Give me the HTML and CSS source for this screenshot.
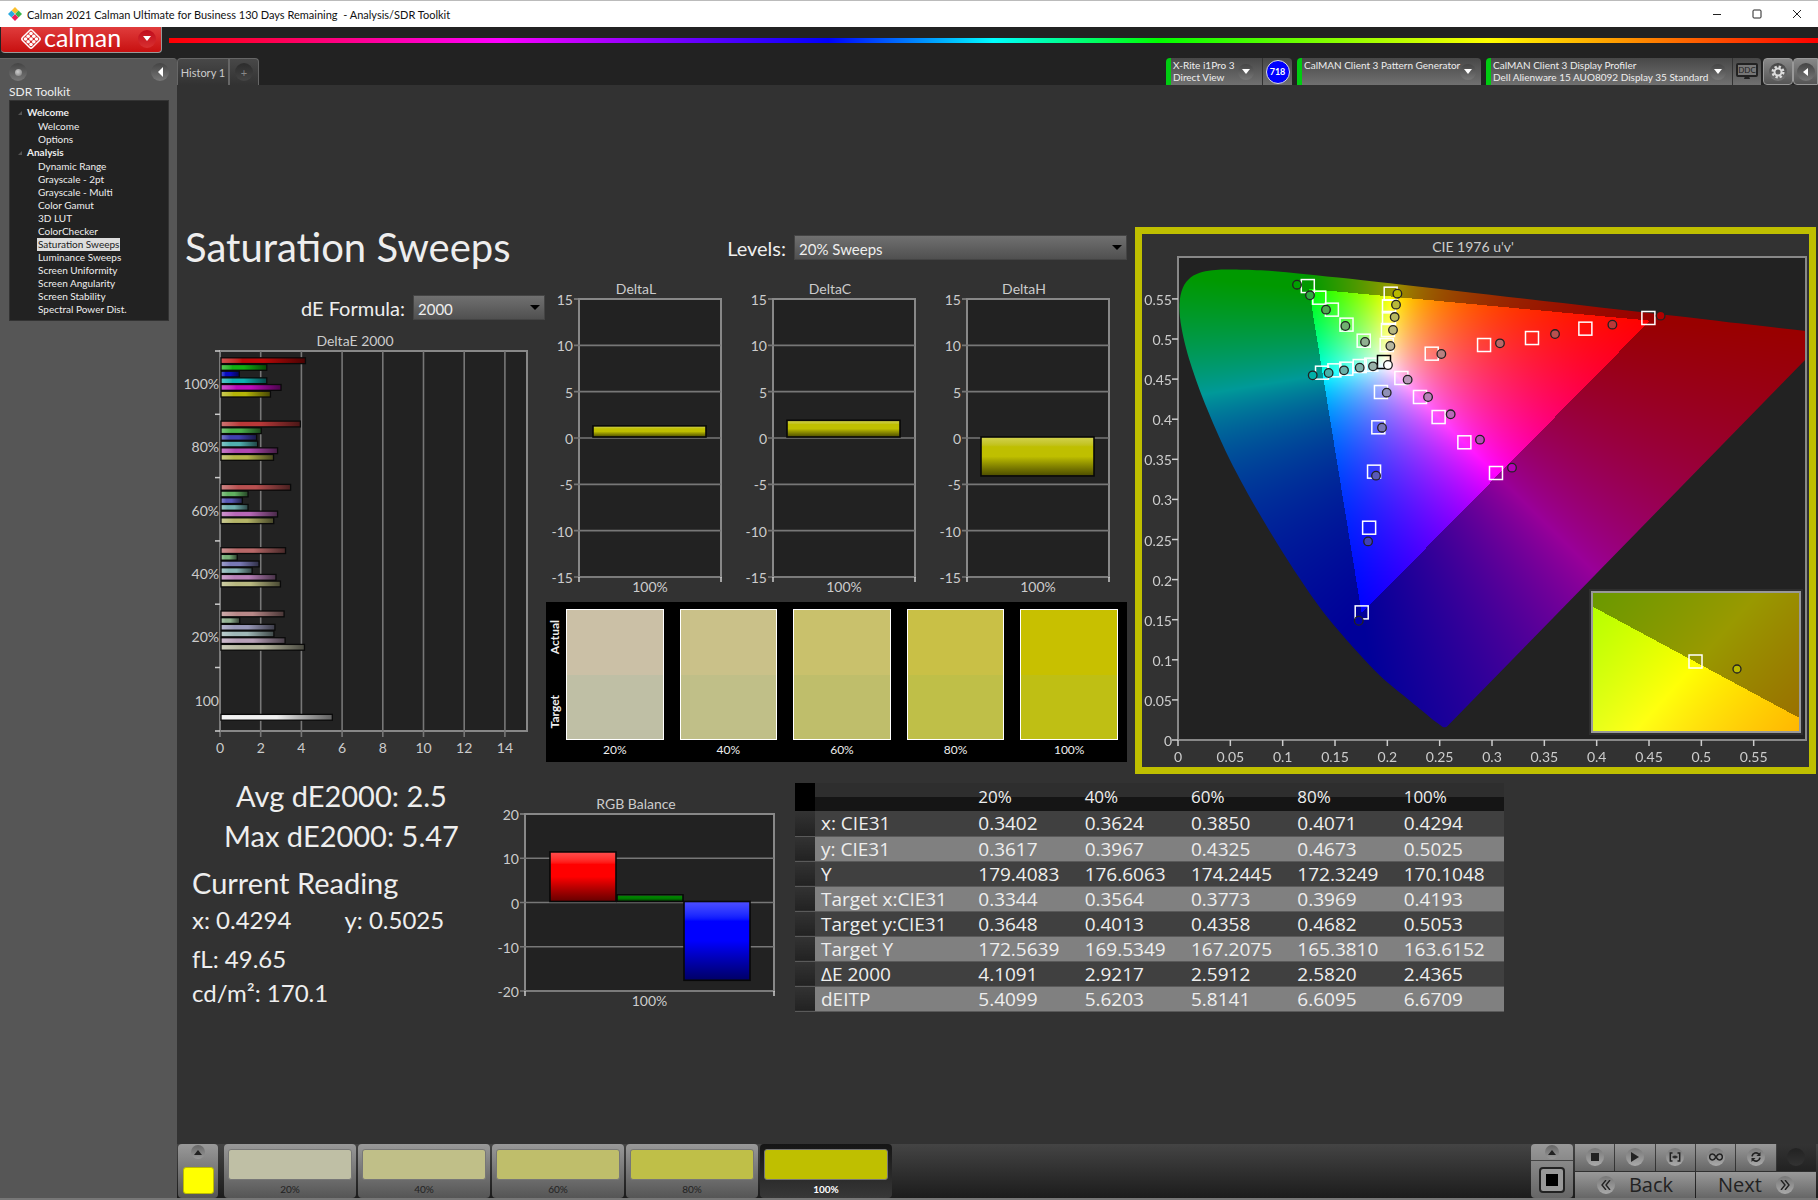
FILE: index.html
```html
<!DOCTYPE html>
<html lang="en">
<head>
    <meta charset="UTF-8">
    <meta name="viewport" content="width=device-width, initial-scale=1.0">
    <title>Calman 2021 - Analysis/SDR Toolkit</title>
    <link rel="stylesheet" href="styles.css">
    <script src="charts.js" defer></script>
</head>
<body>
    <header class="titlebar">
        <svg class="app-icon" width="14" height="14" viewBox="0 0 14 14">
            <path d="M7 0l3.4 3.4L7 6.8 3.6 3.4z" fill="#fbc02d"/>
            <path d="M3.5 3.6L6.9 7l-3.4 3.4L0 7z" fill="#29a9e0"/>
            <path d="M10.5 3.6L14 7l-3.5 3.4L7.1 7z" fill="#3cb54a"/>
            <path d="M7 7.2l3.4 3.4L7 14l-3.4-3.4z" fill="#ec1c5a"/>
        </svg>
        <span class="titlebar-text">Calman 2021 Calman Ultimate for Business 130 Days Remaining&nbsp; - Analysis/SDR Toolkit</span>
        <div class="window-buttons">
            <button aria-label="Minimize"><svg width="10" height="10" viewBox="0 0 10 10"><path d="M1 5.5h8"/></svg></button>
            <button aria-label="Maximize"><svg width="10" height="10" viewBox="0 0 10 10"><rect x="1" y="1" width="8" height="8" rx="1"/></svg></button>
            <button aria-label="Close"><svg width="10" height="10" viewBox="0 0 10 10"><path d="M1 1l8 8M9 1l-8 8"/></svg></button>
        </div>
    </header>

    <div class="brandbar">
        <button class="brand">
            <svg width="22" height="22" viewBox="0 0 22 22">
                <rect x="4" y="4" width="14" height="14" rx="2" transform="rotate(45 11 11)" fill="none" stroke="#fff" stroke-width="1.500"/>
                <g fill="#fff">
                    <circle cx="11" cy="5.500" r="1.800"/><circle cx="8.200" cy="8.200" r="1.800"/><circle cx="13.800" cy="8.200" r="1.800"/>
                    <circle cx="5.500" cy="11" r="1.800"/><circle cx="11" cy="11" r="1.800"/><circle cx="16.500" cy="11" r="1.800"/>
                    <circle cx="8.200" cy="13.800" r="1.800"/><circle cx="13.800" cy="13.800" r="1.800"/><circle cx="11" cy="16.500" r="1.800"/>
                </g>
            </svg>
            <span class="brand-name">calman</span>
            <span class="round round-red"><svg width="8" height="5" viewBox="0 0 8 5"><path d="M0 0h8L4 5z" fill="#fff"/></svg></span>
        </button>
        <div class="rainbow"></div>
    </div>

    <div class="layout">
        <aside class="sidebar">
            <div class="sidebar-top">
                <span class="round"><span class="knob"></span></span>
                <button class="round" aria-label="Collapse"><svg width="5" height="10" viewBox="0 0 5 10"><path d="M5 0v10L0 5z" fill="#fff"/></svg></button>
            </div>
            <h2>SDR Toolkit</h2>
            <nav class="tree">
                <h3>Welcome</h3>
                <a href="#">Welcome</a>
                <a href="#">Options</a>
                <h3>Analysis</h3>
                <a href="#">Dynamic Range</a>
                <a href="#">Grayscale - 2pt</a>
                <a href="#">Grayscale - Multi</a>
                <a href="#">Color Gamut</a>
                <a href="#">3D LUT</a>
                <a href="#">ColorChecker</a>
                <a href="#" class="selected">Saturation Sweeps</a>
                <a href="#">Luminance Sweeps</a>
                <a href="#">Screen Uniformity</a>
                <a href="#">Screen Angularity</a>
                <a href="#">Screen Stability</a>
                <a href="#">Spectral Power Dist.</a>
            </nav>
        </aside>

        <div class="workspace">
            <div class="tabs">
                <button class="tab">History 1</button>
                <button class="tab tab-add" aria-label="Add history"><span class="round">+</span></button>
                <div class="devices">
                    <div class="device meter">
                        <button class="device-name">X-Rite i1Pro 3<br>Direct View</button>
                        <span class="round"><svg width="8" height="5" viewBox="0 0 8 5"><path d="M0 0h8L4 5z" fill="#fff"/></svg></span>
                        <span class="count-box"><span class="count">718</span></span>
                    </div>
                    <div class="device generator">
                        <button class="device-name">CalMAN Client 3 Pattern Generator</button>
                        <span class="round"><svg width="8" height="5" viewBox="0 0 8 5"><path d="M0 0h8L4 5z" fill="#fff"/></svg></span>
                    </div>
                    <div class="device profiler">
                        <button class="device-name">CalMAN Client 3 Display Profiler<br>Dell Alienware 15 AUO8092 Display 35 Standard</button>
                        <span class="round"><svg width="8" height="5" viewBox="0 0 8 5"><path d="M0 0h8L4 5z" fill="#fff"/></svg></span>
                        <span class="ddc-box">
                            <svg width="22" height="18" viewBox="0 0 22 18">
                                <rect x="1" y="1" width="20" height="12" rx="1" fill="#777" stroke="#222" stroke-width="2"/>
                                <path d="M9 13h4l1 3H8z" fill="#222"/>
                                <text x="11" y="10" text-anchor="middle" class="ddc-text">DDC</text>
                            </svg>
                        </span>
                    </div>
                    <button class="tool" aria-label="Settings">
                        <span class="round">
                            <svg width="14" height="14" viewBox="0 0 14 14">
                                <circle cx="7" cy="7" r="5.300" fill="none" stroke="#ddd" stroke-width="2.400" stroke-dasharray="2.300 1.860"/>
                                <circle cx="7" cy="7" r="3.500" fill="none" stroke="#ddd" stroke-width="2"/>
                            </svg>
                        </span>
                    </button>
                    <button class="tool tool-last" aria-label="Collapse devices">
                        <span class="round"><svg width="5" height="8" viewBox="0 0 5 8"><path d="M5 0v8L0 4z" fill="#fff"/></svg></span>
                    </button>
                </div>
            </div>

            <main class="content">
                <section class="upper">
                    <div class="de-column">
                        <h1>Saturation Sweeps</h1>
                        <div class="field de-field">
                            <label for="formula">dE Formula:</label>
                            <span class="select"><select id="formula"><option>2000</option><option>1994</option><option>1976</option></select></span>
                        </div>
                        <svg id="delta-e" class="chart" viewBox="0 0 361 424"></svg>
                    </div>

                    <div class="mid-column">
                        <div class="field levels-field">
                            <label for="levels">Levels:</label>
                            <span class="select"><select id="levels"><option>20% Sweeps</option><option>25% Sweeps</option></select></span>
                        </div>
                        <div class="delta-row">
                            <svg id="delta-l" class="chart" viewBox="0 0 194 322"></svg>
                            <svg id="delta-c" class="chart" viewBox="0 0 194 322"></svg>
                            <svg id="delta-h" class="chart" viewBox="0 0 194 322"></svg>
                        </div>
                        <div class="swatches">
                            <div class="swatch-side"><span>Actual</span><span>Target</span></div>
                            <figure class="swatch s20"><div></div><figcaption>20%</figcaption></figure>
                            <figure class="swatch s40"><div></div><figcaption>40%</figcaption></figure>
                            <figure class="swatch s60"><div></div><figcaption>60%</figcaption></figure>
                            <figure class="swatch s80"><div></div><figcaption>80%</figcaption></figure>
                            <figure class="swatch s100"><div></div><figcaption>100%</figcaption></figure>
                        </div>
                    </div>

                    <div class="cie">
                        <svg id="cie-chart" class="chart" viewBox="0 0 667 533">
                            <text x="331" y="18" class="axis" text-anchor="middle">CIE 1976 u'v'</text>
                            <rect x="36" y="23" width="628" height="483" fill="#222"/>
                            <foreignObject x="36" y="23" width="628" height="483"><canvas id="cie-fill" width="628" height="483"></canvas></foreignObject>
                            <g id="cie-axes"></g>
                            <g id="cie-points"></g>
                            <rect x="447" y="355" width="214" height="146" fill="#2e2e2e"/>
                            <foreignObject x="450" y="358" width="208" height="140"><canvas id="cie-zoom" width="208" height="140"></canvas></foreignObject>
                            <rect x="450" y="358" width="208" height="140" fill="none" stroke="#999" stroke-width="2"/>
                            <rect x="547" y="421" width="13" height="13" class="target"/>
                            <circle cx="595" cy="435" r="4" fill="#b9b900" class="actual"/>
                        </svg>
                    </div>
                </section>

                <section class="lower">
                    <div class="stats">
                        <p class="big center">Avg dE2000: 2.5</p>
                        <p class="big center">Max dE2000: 5.47</p>
                        <p class="big current">Current Reading</p>
                        <p class="pair"><span>x: 0.4294</span><span>y: 0.5025</span></p>
                        <p>fL: 49.65</p>
                        <p>cd/m²: 170.1</p>
                    </div>
                    <svg id="rgb" class="chart" viewBox="0 0 288 240"></svg>
                    <table>
                        <thead>
                            <tr><th class="grip"></th><th></th><th>20%</th><th>40%</th><th>60%</th><th>80%</th><th>100%</th></tr>
                        </thead>
                        <tbody>
                            <tr><td class="grip"></td><td>x: CIE31</td><td>0.3402</td><td>0.3624</td><td>0.3850</td><td>0.4071</td><td>0.4294</td></tr>
                            <tr><td class="grip"></td><td>y: CIE31</td><td>0.3617</td><td>0.3967</td><td>0.4325</td><td>0.4673</td><td>0.5025</td></tr>
                            <tr><td class="grip"></td><td>Y</td><td>179.4083</td><td>176.6063</td><td>174.2445</td><td>172.3249</td><td>170.1048</td></tr>
                            <tr><td class="grip"></td><td>Target x:CIE31</td><td>0.3344</td><td>0.3564</td><td>0.3773</td><td>0.3969</td><td>0.4193</td></tr>
                            <tr><td class="grip"></td><td>Target y:CIE31</td><td>0.3648</td><td>0.4013</td><td>0.4358</td><td>0.4682</td><td>0.5053</td></tr>
                            <tr><td class="grip"></td><td>Target Y</td><td>172.5639</td><td>169.5349</td><td>167.2075</td><td>165.3810</td><td>163.6152</td></tr>
                            <tr><td class="grip"></td><td>ΔE 2000</td><td>4.1091</td><td>2.9217</td><td>2.5912</td><td>2.5820</td><td>2.4365</td></tr>
                            <tr><td class="grip"></td><td>dEITP</td><td>5.4099</td><td>5.6203</td><td>5.8141</td><td>6.6095</td><td>6.6709</td></tr>
                        </tbody>
                    </table>
                </section>
            </main>

            <footer class="bottombar">
                <button class="current-patch" aria-label="Current pattern">
                    <span class="round small"><svg width="8" height="5" viewBox="0 0 8 5"><path d="M0 5h8L4 0z" fill="#222"/></svg></span>
                    <span class="patch-yellow"></span>
                </button>
                <button class="patch p20"><span></span>20%</button>
                <button class="patch p40"><span></span>40%</button>
                <button class="patch p60"><span></span>60%</button>
                <button class="patch p80"><span></span>80%</button>
                <button class="patch p100 active"><span></span>100%</button>

                <div class="stop-box">
                    <button class="stop-up" aria-label="Expand"><span class="round small"><svg width="8" height="5" viewBox="0 0 8 5"><path d="M0 5h8L4 0z" fill="#222"/></svg></span></button>
                    <button class="stop-main" aria-label="Pattern window"><svg width="28" height="28" viewBox="0 0 28 28"><rect x="2" y="2" width="24" height="24" rx="3" fill="#999" stroke="#222" stroke-width="2"/><path d="M8 8h12v12H8z" fill="#000"/></svg></button>
                </div>
                <div class="transport">
                    <div class="transport-row">
                        <button aria-label="Stop"><span class="round"><svg width="8" height="8" viewBox="0 0 8 8"><path d="M0 0h8v8H0z" fill="#222"/></svg></span></button>
                        <button aria-label="Play"><span class="round"><svg width="8" height="10" viewBox="0 0 8 10"><path d="M0 0l8 5-8 5z" fill="#222"/></svg></span></button>
                        <button aria-label="Read series"><span class="round"><svg width="12" height="10" viewBox="0 0 12 10" fill="none" stroke="#222" stroke-width="1.500"><path d="M3.500 1H1.300v8h2.200M8.500 1h2.200v8H8.500M3.500 5h5" /><path d="M5.200 3.500v3M6.800 3.500v3" stroke-width="1"/></svg></span></button>
                        <button aria-label="Read continuously"><span class="round"><svg width="14" height="8" viewBox="0 0 14 8" fill="none" stroke="#222" stroke-width="1.500"><path d="M7 4C5.500 1.500 4.500 1 3.600 1a3 3 0 0 0 0 6C4.500 7 5.500 6.500 7 4s2.500-3 3.400-3a3 3 0 0 1 0 6C9.500 7 8.500 6.500 7 4z"/></svg></span></button>
                        <button aria-label="Refresh"><span class="round"><svg width="12" height="12" viewBox="0 0 12 12" fill="none" stroke="#222" stroke-width="1.700"><path d="M2 5.300A4 4 0 0 1 9 3.200M10 6.700A4 4 0 0 1 3 8.800"/><path d="M10.500 1v4h-4zM1.500 11V7h4z" fill="#222" stroke="none"/></svg></span></button>
                        <button aria-label="Record" disabled><span class="round dark"></span></button>
                    </div>
                    <div class="transport-row nav-row">
                        <button><span class="round"><svg width="10" height="10" viewBox="0 0 10 10" fill="none" stroke="#222" stroke-width="1.400"><path d="M5 0L1 5l4 5M9 0L5 5l4 5"/></svg></span>Back</button>
                        <button>Next<span class="round"><svg width="10" height="10" viewBox="0 0 10 10" fill="none" stroke="#222" stroke-width="1.400"><path d="M1 0l4 5-4 5M5 0l4 5-4 5"/></svg></span></button>
                    </div>
                </div>
            </footer>
        </div>
    </div>
</body>
</html>
```
FILE: styles.css
```css
* {
    box-sizing: border-box;
}

body {
    margin: 0;
    min-height: 100vh;
    display: flex;
    flex-direction: column;
    font-family: Lato, "Open Sans", sans-serif;
    font-size: 12px;
    color: #eee;
    background-color: #323232;
    border-top: 1px solid #bbb;
    border-bottom: 2px solid #777;
}

button {
    font-family: inherit;
    color: inherit;
    border: none;
    padding: 0;
    margin: 0;
    background: none;
    cursor: pointer;
}

h1, h2, h3, p, figure {
    margin: 0;
    font-weight: normal;
}

/* window frame */
.titlebar {
    display: flex;
    align-items: center;
    height: 26px;
    padding: 0 6px 0 8px;
    background-color: #fff;
    color: #111;
}

.titlebar-text {
    margin-left: 5px;
    font-size: 11px;
}

.window-buttons {
    margin-left: auto;
    display: flex;
}

.window-buttons button {
    width: 40px;
    height: 24px;
    display: grid;
    place-items: center;
}

.window-buttons button:last-child {
    width: 30px;
    margin-left: 5px;
}

.window-buttons svg {
    fill: none;
    stroke: #222;
    stroke-width: 1;
}

.brandbar {
    display: flex;
    height: 31px;
    padding-left: 1px;
    background-color: #222;
}

.brand {
    display: flex;
    align-items: center;
    width: 161px;
    height: 26px;
    padding: 0 5px 2px 19px;
    color: #fff;
    background: linear-gradient(#e03c3c, #c81010);
    border: 1px solid #999;
    border-top: none;
    border-left: none;
    border-radius: 0 0 4px 4px;
}

.brand-name {
    margin: 0 auto 4px 2px;
    font-size: 25px;
    line-height: 22px;
}

.rainbow {
    flex: 1;
    height: 5px;
    margin: 11px 0 0 7px;
    background: linear-gradient(90deg, #f00, #f0f 20%, #00f 40%, #0ff 50%, #0f0 60%, #ff0 80%, #f00);
}

.round {
    flex: none;
    width: 18px;
    height: 18px;
    display: grid;
    place-items: center;
    border-radius: 50%;
    background: linear-gradient(#444, #777);
}

.round-red {
    background: linear-gradient(#c00c1c, #d83030);
}

.small {
    width: 14px;
    height: 14px;
    background: linear-gradient(#666, #999);
}

.dark {
    background: linear-gradient(#222, #333);
}

.knob {
    width: 7px;
    height: 7px;
    border-radius: 50%;
    background: radial-gradient(circle at 40% 40%, #ccc, #777);
}

.layout {
    flex: 1;
    display: grid;
    grid-template-columns: 177px 1fr;
    background-color: #222;
}

/* sidebar */
.sidebar {
    padding: 4px 8px 0 9px;
    background-color: #565656;
    border-top: 1px solid #666;
    border-radius: 0 4px 0 0;
}

.sidebar-top {
    display: flex;
    justify-content: space-between;
}

.sidebar h2 {
    margin: 3px 0 0;
    font-size: 12px;
    line-height: 16px;
}

.tree {
    display: flex;
    flex-direction: column;
    align-items: flex-start;
    height: 221px;
    padding: 5px 0 0 18px;
    background-color: #222;
    border: 1px solid #333;
    font-size: 10px;
    line-height: 13px;
}

.tree h3 {
    position: relative;
    margin: 0 0 1px -1px;
    font-size: 10px;
    font-weight: bold;
}

.tree h3::before {
    content: "";
    position: absolute;
    left: -9px;
    top: 5px;
    border-left: 4px solid transparent;
    border-bottom: 4px solid #555;
}

.tree a {
    margin-left: 9px;
    padding: 0 1px;
    color: #eee;
    text-decoration: none;
}

.tree .selected {
    color: #222;
    background-color: #ddd;
}

/* tabs and devices */
.workspace {
    display: flex;
    flex-direction: column;
    min-width: 0;
}

.tabs {
    display: flex;
    height: 27px;
}

.tab {
    width: 52px;
    font-size: 11px;
    color: #ccc;
    background: linear-gradient(#484848, #323232);
    border: 1px solid #666;
    border-bottom: none;
    border-radius: 4px 0 0 0;
}

.tab-add {
    display: grid;
    place-items: center;
    width: 30px;
    color: #888;
    border-radius: 0 4px 0 0;
}

.tab-add .round {
    background: linear-gradient(#2c2c2c, #444);
}

.devices {
    margin-left: auto;
    display: flex;
    gap: 5px;
}

.device {
    display: flex;
    align-items: center;
    background: linear-gradient(#484848, #707070);
    border-left: 5px solid #0c1;
    border-radius: 4px 4px 0 0;
}

.device .round {
    width: 16px;
    height: 16px;
}

.device-name {
    position: relative;
    z-index: 1;
    align-self: flex-start;
    flex: 1;
    min-width: 0;
    padding: 1px 0 0 2px;
    font-size: 10px;
    line-height: 12px;
    text-align: left;
    white-space: nowrap;
}

.meter {
    width: 126px;
}

.generator {
    width: 184px;
    padding-right: 5px;
}

.profiler {
    width: 275px;
}

.count-box {
    display: grid;
    place-items: center;
    width: 30px;
    height: 27px;
    margin-left: 8px;
    border-left: 1px solid #333;
}

.count {
    width: 24px;
    height: 24px;
    border: 1px solid #ddd;
    border-radius: 50%;
    background-color: #00f;
    color: #fff;
    font-size: 9px;
    font-weight: bold;
    line-height: 22px;
    text-align: center;
}

.ddc-box {
    display: grid;
    place-items: center;
    width: 29px;
    height: 27px;
    margin-left: 6px;
    border-left: 1px solid #333;
}

.ddc-text {
    fill: #222;
    font-size: 8px;
}

.tool {
    display: grid;
    place-items: center;
    width: 30px;
    margin-left: -3px;
    background: linear-gradient(#888, #555);
    border: 1px solid #999;
    border-radius: 4px;
}

.tool-last {
    width: 25px;
    margin-left: -5px;
    border-radius: 4px 0 0 4px;
}

/* main area */
.content {
    flex: 1;
    padding: 142px 0 0;
    background-color: #323232;
}

.upper {
    display: grid;
    grid-template-columns: 361fr 582fr 688fr;
    padding: 0 2px 0 8px;
}

.chart {
    display: block;
    width: 100%;
    height: auto;
    overflow: visible;
}

.de-column h1 {
    font-size: 40px;
    line-height: 40px;
    white-space: nowrap;
}

.field {
    display: flex;
    align-items: center;
    justify-content: flex-end;
    gap: 8px;
    height: 25px;
    font-size: 20px;
}

.de-field {
    margin: 28px 1px 13px 0;
}

.levels-field {
    margin: 8px 1px 20px 0;
}

.select {
    position: relative;
    display: flex;
}

.select::after {
    content: "";
    position: absolute;
    right: 5px;
    top: 10px;
    border: 5px solid transparent;
    border-top-color: #000;
    border-bottom: none;
    pointer-events: none;
}

select {
    appearance: none;
    width: 132px;
    height: 25px;
    padding: 2px 4px 0;
    font-family: inherit;
    font-size: 15px;
    color: #eee;
    background: linear-gradient(#707070, #505050);
    border: 1px solid #444;
    border-radius: 0;
}

#levels {
    width: 333px;
}

.delta-row {
    display: grid;
    grid-template-columns: repeat(3, 1fr);
}

.axis {
    fill: #ccc;
    font-size: 14px;
}

.swatches {
    display: flex;
    height: 160px;
    margin-right: 1px;
    padding: 7px 9px 0 0;
    background-color: #000;
}

.swatch-side {
    display: flex;
    flex-direction: column;
    align-items: center;
    justify-content: space-between;
    width: 20px;
    height: 130px;
    padding: 11px 2px 11px 0;
    font-weight: bold;
    line-height: 16px;
}

.swatch-side span {
    writing-mode: vertical-rl;
    transform: rotate(180deg);
}

.swatch {
    flex: 1;
}

.swatch + .swatch {
    margin-left: 16px;
}

.swatch div {
    height: 131px;
    border: 1px solid #fff;
}

.swatch figcaption {
    text-align: center;
    line-height: 20px;
}

.s20 div { background: linear-gradient(#cbc0a6 50%, #bfbfa5 50%); }
.s40 div { background: linear-gradient(#cac189 50%, #c0bf88 50%); }
.s60 div { background: linear-gradient(#c9c16c 50%, #bfbe6b 50%); }
.s80 div { background: linear-gradient(#c9c046 50%, #bfbf48 50%); }
.s100 div { background: linear-gradient(#c8c000 50%, #bfbf14 50%); }

.cie {
    margin-left: 7px;
    border: 7px solid #bfbf00;
    align-self: start;
}

.target {
    fill: none;
    stroke: #fff;
    stroke-width: 1.5px;
}

.white-target {
    stroke: #000;
}

.actual {
    stroke: #222;
    stroke-width: 1.3px;
}

.lower {
    display: grid;
    grid-template-columns: 310fr 288fr 12fr 709fr 314fr;
    padding-left: 8px;
    align-items: start;
}

.stats {
    padding: 2px 0 0 7px;
    font-size: 24px;
    line-height: 34px;
}

.stats .big {
    font-size: 29px;
    line-height: 40px;
}

.stats .center {
    padding-right: 4px;
    text-align: center;
}

.stats .current {
    margin-top: 7px;
}

.pair {
    display: flex;
    gap: 53px;
    margin-bottom: 5px;
}

table {
    grid-column: 4;
    width: 100%;
    margin-top: 9px;
    table-layout: fixed;
    border-collapse: collapse;
    font-family: "Open Sans", sans-serif;
    font-size: 19px;
    line-height: 24px;
}

th, td {
    padding: 0 0 0 6px;
    width: 15%;
    height: 25px;
    text-align: left;
    white-space: nowrap;
}

th {
    height: 28px;
    font-size: 17px;
    font-weight: normal;
    background: linear-gradient(#2e2e2e 50%, #151515 50%);
}

tr > :nth-child(2) {
    width: auto;
}

tr > .grip {
    width: 20px;
    padding: 0;
}

th.grip {
    background: #000;
}

td.grip {
    background: linear-gradient(#333, #222);
}

tbody tr {
    background-color: #404040;
    border-bottom: 1px solid #5a5a5a;
}

tbody tr:nth-child(even) {
    background-color: #808080;
}

/* bottom bar */
.bottombar {
    display: flex;
    gap: 2px;
    height: 54px;
    padding: 0 2px 0 1px;
    background: linear-gradient(#444, #1c1c1c);
}

.current-patch {
    display: flex;
    flex-direction: column;
    align-items: center;
    justify-content: space-between;
    width: 40px;
    margin-right: 4px;
    padding: 1px 4px 4px;
    background: linear-gradient(#999, #555);
    border-radius: 4px;
}

.patch-yellow {
    width: 31px;
    height: 27px;
    background-color: #ff0;
    border: 1px solid #bb0;
    border-radius: 3px;
}

.patch {
    display: flex;
    flex-direction: column;
    width: 132px;
    padding: 5px 4px 0;
    align-items: stretch;
    font-size: 10px;
    line-height: 17px;
    color: #222;
    background: linear-gradient(#999, #555);
    border-radius: 4px;
}

.patch span {
    height: 32px;
    margin-bottom: 1px;
    border: 1px solid #777;
    border-radius: 3px;
}

.p20 span { background-color: #bfbfa5; }
.p40 span { background-color: #c0bf88; }
.p60 span { background-color: #bfbe6b; }
.p80 span { background-color: #bfbf48; }
.p100 span { background-color: #bfbf00; }

.patch.active {
    color: #fff;
    font-weight: bold;
    background: linear-gradient(#151515, #383838);
}

.stop-box {
    display: flex;
    flex-direction: column;
    width: 42px;
    margin-left: auto;
    background: linear-gradient(#999, #666);
    border-radius: 4px;
}

.stop-up {
    display: grid;
    place-items: center;
    height: 17px;
    border-bottom: 1px solid #444;
}

.stop-main {
    flex: 1;
    display: grid;
    place-items: center;
}

.transport {
    display: flex;
    flex-direction: column;
    gap: 1px;
    width: 241px;
}

.transport-row {
    display: flex;
    gap: 1px;
    height: 27px;
}

.transport-row button {
    flex: 1;
    display: flex;
    align-items: center;
    justify-content: center;
    background: linear-gradient(#999, #666);
}

.transport-row button:disabled {
    background: linear-gradient(#333, #222);
}

.transport .round {
    background: linear-gradient(#777, #aaa);
}

.transport .round.dark {
    background: linear-gradient(#222, #333);
}

.nav-row button {
    gap: 14px;
    font-family: "Open Sans", sans-serif;
    font-size: 20px;
    line-height: 26px;
    color: #222;
}
```
FILE: charts.js
```js
const FRAME = '#888';
const GRID = '#777';

function line(x1, y1, x2, y2, color, width) {
    return `<line x1="${x1}" y1="${y1}" x2="${x2}" y2="${y2}" stroke="${color}" stroke-width="${width}"/>`;
}

function label(x, y, text, anchor) {
    return `<text x="${x}" y="${y}" text-anchor="${anchor}" class="axis">${text}</text>`;
}

// light -> base -> dark shading used on every bar
function gradient(id, color, vertical) {
    return `<linearGradient id="${id}" x2="${vertical ? 0 : 1}" y2="${vertical ? 1 : 0}">
        <stop offset="0" stop-color="color-mix(in srgb, ${color} 70%, white)"/>
        <stop offset="0.25" stop-color="${color}"/>
        <stop offset="0.5" stop-color="${color}"/>
        <stop offset="1" stop-color="color-mix(in srgb, ${color} 40%, black)"/>
    </linearGradient>`;
}

function drawDeltaE() {
    const groups = [
        ['100%', [4.15, 2.25, 0.9, 2.25, 2.95, 2.43], ['#bb0808', '#10b010', '#0a0ac0', '#10b0b0', '#bb0abb', '#b5b508']],
        ['80%', [3.9, 1.98, 1.75, 1.8, 2.78, 2.58], ['#b83838', '#48b048', '#4040b0', '#50b0b0', '#b048b0', '#b5b548']],
        ['60%', [3.42, 1.33, 1.05, 1.33, 2.78, 2.59], ['#b85050', '#60b060', '#5858b4', '#70b0b0', '#b868b8', '#b5b568']],
        ['40%', [3.17, 0.8, 1.87, 1.53, 2.7, 2.92], ['#b86868', '#78b078', '#7878b4', '#88b4b4', '#b880b8', '#b8b880']],
        ['20%', [3.1, 0.92, 2.65, 2.6, 3.15, 4.1], ['#b88888', '#90b090', '#9898b8', '#a0b8b8', '#b8a0b8', '#b8b8a0']],
        ['100', [0, 0, 0, 0, 0, 0, 5.47], ['', '', '', '', '', '', '#f0f0f0']]
    ];
    const left = 35, top = 18, bottom = 398, right = 342, unit = 20.35, step = 63.3;
    let out = label(170, 13, 'DeltaE 2000', 'middle');
    out += `<rect x="${left}" y="${top}" width="${right - left}" height="${bottom - top}" fill="#222" stroke="${FRAME}" stroke-width="2"/>`;
    for (let v = 0; v <= 14; v += 2) {
        const x = left + v * unit;
        out += line(x, top, x, bottom + 6, GRID, 1.6);
        out += label(x, bottom + 22, v, 'middle');
    }
    groups.forEach(([name, values, colors], g) => {
        const y0 = top + g * step;
        out += line(left - 5, y0, left, y0, '#ccc', 1.5);
        out += label(left - 1, y0 + 38, name, 'end');
        values.forEach((v, i) => {
            if (!v) return;
            const y = y0 + 6.8 + i * 6.68;
            out += gradient(`de${g}${i}`, colors[i], false);
            out += `<rect x="${left + 1}" y="${y}" width="${v * unit}" height="5.8" fill="url(#de${g}${i})" stroke="#0a0a0a" stroke-width="1.3"/>`;
        });
    });
    out += line(left - 5, bottom, left, bottom, '#ccc', 1.5);
    document.getElementById('delta-e').innerHTML = out;
}

// vertical bar chart with one category
function drawBars(id, title, opt) {
    const { left, right, top, bottom, max, step, titleX, bars } = opt;
    const zero = (top + bottom) / 2;
    const unit = (bottom - top) / (2 * max);
    let out = label(titleX, top - 5, title, 'middle');
    out += `<rect x="${left}" y="${top}" width="${right - left}" height="${bottom - top}" fill="#222" stroke="${FRAME}" stroke-width="2"/>`;
    for (let v = max; v >= -max; v -= step) {
        const y = zero - v * unit;
        out += line(left - 5, y, right, y, v === max ? FRAME : GRID, 1.6);
        out += label(left - 6, y + 6, v, 'end');
    }
    out += line(left, bottom, left, bottom + 5, '#ccc', 1.5);
    out += line(right, bottom, right, bottom + 5, '#ccc', 1.5);
    out += label((left + right) / 2, bottom + 15, '100%', 'middle');
    bars.forEach((b, i) => {
        const h = Math.abs(b.value) * unit;
        const y = b.value > 0 ? zero - h : zero;
        out += gradient(id + i, b.color, true);
        out += `<rect x="${b.x}" y="${y - 1}" width="${b.width}" height="${h}" fill="url(#${id + i})" stroke="#080808" stroke-width="1.6"/>`;
    });
    document.getElementById(id).innerHTML = out;
}

const deltaOpt = { left: 33, right: 175, top: 19, bottom: 297, max: 15, step: 5, titleX: 90 };

// spectral locus, CIE 1931 xy, 380-700nm
const LOCUS = [
    [.1741, .0050], [.1726, .0048], [.1714, .0051], [.1689, .0069], [.1644, .0109], [.1566, .0177],
    [.1440, .0297], [.1241, .0578], [.1096, .0868], [.0913, .1327], [.0687, .2007], [.0454, .2950],
    [.0235, .4127], [.0082, .5384], [.0039, .6548], [.0139, .7502], [.0389, .8120], [.0743, .8338],
    [.1142, .8262], [.1547, .8059], [.2296, .7543], [.3016, .6923], [.3731, .6245], [.4441, .5547],
    [.5125, .4866], [.5752, .4242], [.6270, .3725], [.6658, .3340], [.6915, .3083], [.7190, .2809],
    [.7347, .2653]
];

const CIE = { x: 36, y: 506, u: 1046.7, v: 802 };

// colour of a chromaticity, dimmed outside Rec.709
function colorAt(x, y) {
    const X = x / y, Z = (1 - x - y) / y;
    const r = 3.2406 * X - 1.5372 - 0.4986 * Z;
    const g = -0.9689 * X + 1.8758 + 0.0415 * Z;
    const b = 0.0557 * X - 0.2040 + 1.0570 * Z;
    const m = Math.max(r, g, b);
    const dim = Math.min(r, g, b) < 0 ? 153 : 255;
    return [r / m * dim, g / m * dim, b / m * dim];
}

function paint(canvas, toXY) {
    const ctx = canvas.getContext('2d');
    const img = ctx.createImageData(canvas.width, canvas.height);
    for (let j = 0; j < canvas.height; j++) {
        for (let i = 0; i < canvas.width; i++) {
            const [x, y] = toXY(i, j);
            const p = (j * canvas.width + i) * 4;
            const c = colorAt(x, y);
            img.data[p] = c[0];
            img.data[p + 1] = c[1];
            img.data[p + 2] = c[2];
            img.data[p + 3] = 255;
        }
    }
    ctx.putImageData(img, 0, 0);
    return ctx;
}

function drawCieFill() {
    const canvas = document.getElementById('cie-fill');
    const ctx = paint(canvas, (i, j) => {
        const u = (i + 0.5) / CIE.u, v = (483 - j - 0.5) / CIE.v;
        const d = 6 * u - 16 * v + 12;
        return [9 * u / d, 4 * v / d];
    });
    // keep only the part inside the spectral locus, smoothed between samples
    const pts = LOCUS.map(([x, y]) => {
        const d = -2 * x + 12 * y + 3;
        return [4 * x / d * CIE.u, 483 - 9 * y / d * CIE.v];
    });
    ctx.globalCompositeOperation = 'destination-in';
    ctx.beginPath();
    ctx.moveTo(pts[0][0], pts[0][1]);
    for (let i = 0; i < pts.length - 1; i++) {
        const a = pts[Math.max(i - 1, 0)], b = pts[i], c = pts[i + 1], d = pts[Math.min(i + 2, pts.length - 1)];
        ctx.bezierCurveTo(
            b[0] + (c[0] - a[0]) / 6, b[1] + (c[1] - a[1]) / 6,
            c[0] - (d[0] - b[0]) / 6, c[1] - (d[1] - b[1]) / 6,
            c[0], c[1]
        );
    }
    ctx.closePath();
    ctx.fill();

    paint(document.getElementById('cie-zoom'), (i, j) => [.4193 + (i - 104) / 4158, .5053 - (j - 70) / 2820]);
}

function drawCieAxes() {
    let out = `<rect x="36" y="23" width="628" height="483" fill="none" stroke="${FRAME}" stroke-width="2"/>`;
    for (let n = 0; n < 12; n++) {
        const text = +(n * 0.05).toFixed(2);
        const x = CIE.x + text * CIE.u;
        const y = CIE.y - text * CIE.v;
        out += line(x, 506, x, 512, '#ccc', 1.5);
        out += label(x, 528, text, 'middle');
        out += line(30, y, 36, y, '#ccc', 1.5);
        out += label(30, y + 6, text, 'end');
    }
    document.getElementById('cie-axes').innerHTML = out;
}

const TARGETS = [
    [.124, .566], [.135, .5515], [.147, .5366], [.161, .5179], [.1774, .4979],
    [.2032, .5565], [.2016, .5407], [.2016, .5262], [.2006, .5112], [.1994, .4925],
    [.2424, .4817], [.2924, .4925], [.3382, .5012], [.3892, .5129], [.4494, .5262],
    [.1376, .458], [.1494, .4609], [.1608, .463], [.1736, .4663], [.1847, .468],
    [.1939, .4339], [.1914, .3899], [.1873, .3346], [.1826, .2647], [.1755, .1591],
    [.2134, .4514], [.2312, .4277], [.249, .4027], [.2736, .3712], [.3038, .3329]
];

const ACTUALS = [
    [.1137, .5677, '#00a000'], [.1261, .5545, '#30a840'], [.1414, .5366, '#50a850'], [.1599, .5162, '#70b070'], [.1787, .4963, '#90b090'],
    [.2096, .5565, '#b8b800'], [.2083, .5428, '#b8b838'], [.207, .5274, '#b8b860'], [.2054, .5112, '#b8b880'], [.2029, .4913, '#b8b8a0'],
    [.2516, .4813, '#b88080'], [.3076, .4946, '#b86868'], [.3602, .5062, '#b85050'], [.415, .5179, '#b83838'], [.4611, .5291, '#b00000'],
    [.1287, .4547, '#00b0a8'], [.1439, .4576, '#48b0a8'], [.1586, .4609, '#68b0a8'], [.1736, .4643, '#80b0a8'], [.1863, .4659, '#98b0a8'],
    [.1994, .4331, '#9090b8'], [.1949, .3894, '#7878b8'], [.1892, .3296, '#5858b8'], [.1816, .2476, '#4040b8'], [.1727, .1487, '#0000a8'],
    [.2194, .4493, '#b898b8'], [.2389, .4277, '#b880b8'], [.2605, .4061, '#b868b8'], [.2885, .3745, '#b848b8'], [.3191, .3396, '#b800b8'],
    [.2006, .4676, '#ffffff']
];

function drawCiePoints() {
    let out = '';
    const square = (u, v, cls) =>
        `<rect x="${CIE.x + u * CIE.u - 6.5}" y="${CIE.y - v * CIE.v - 6.5}" width="13" height="13" class="target ${cls}"/>`;
    TARGETS.forEach(([u, v]) => out += square(u, v, ''));
    out += square(.1968, .4713, 'white-target');
    ACTUALS.forEach(([u, v, color]) => {
        out += `<circle cx="${CIE.x + u * CIE.u}" cy="${CIE.y - v * CIE.v}" r="4.3" fill="${color}" class="actual"/>`;
    });
    document.getElementById('cie-points').innerHTML = out;
}

drawDeltaE();
drawBars('delta-l', 'DeltaL', { ...deltaOpt, bars: [{ x: 47, width: 113, value: 1.2, color: '#bfbf00' }] });
drawBars('delta-c', 'DeltaC', { ...deltaOpt, bars: [{ x: 47, width: 113, value: 1.8, color: '#bfbf00' }] });
drawBars('delta-h', 'DeltaH', { ...deltaOpt, bars: [{ x: 47, width: 113, value: -4.2, color: '#bfbf00' }] });
drawBars('rgb', 'RGB Balance', {
    left: 30, right: 279, top: 40, bottom: 217, max: 20, step: 10, titleX: 141,
    bars: [
        { x: 55, width: 66, value: 11.2, color: '#ff0000' },
        { x: 122, width: 66, value: 1.5, color: '#008000' },
        { x: 189, width: 66, value: -17.8, color: '#0000ff' }
    ]
});
drawCieFill();
drawCieAxes();
drawCiePoints();
```
